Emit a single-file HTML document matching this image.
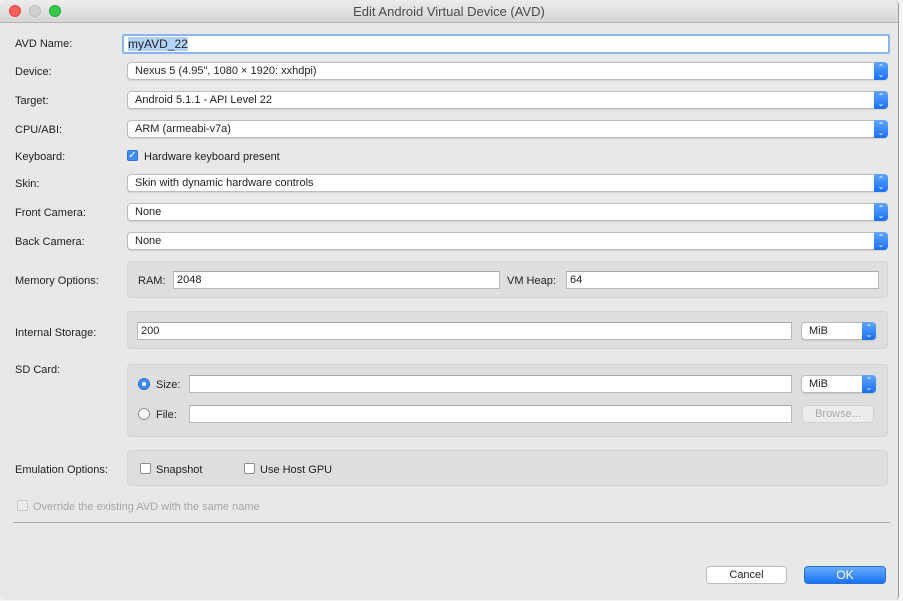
<!DOCTYPE html><html><head><style>
body{margin:0;width:903px;height:601px;background:#f4f4f4;position:relative;overflow:hidden;font-family:"Liberation Sans",sans-serif;font-size:11px;color:#222}
.win{position:absolute;left:0;top:0;width:898px;height:600px;background:#e8e8e8;border-right:1px solid #9a9a9a;border-radius:5px 5px 4px 4px;overflow:hidden}
.title{position:absolute;left:0;top:0;width:100%;height:22px;background:linear-gradient(#ececec,#d6d6d6);border-bottom:1px solid #b5b5b5;text-align:center;line-height:23px;font-size:13px;color:#4a4a4a}
.dot{position:absolute;top:5px;width:12px;height:12px;border-radius:50%;box-sizing:border-box}
.a{position:absolute}
.lbl{position:absolute;left:15px}
.sel{position:absolute;left:127px;width:761px;height:18px;background:#fff;border:1px solid #bcbcbc;border-radius:4px;box-shadow:0 1px 1px rgba(0,0,0,.1);line-height:16px;padding-left:7px;box-sizing:border-box}
.sel::after{content:"";position:absolute;right:-1px;top:-1px;width:14px;height:18px;background:linear-gradient(#5fa6fb,#1a6ff5);border-radius:0 4px 4px 0}
.sel i{position:absolute;right:2px;top:1px;color:#fff;font-style:normal;font-size:8px;line-height:7px;z-index:2;text-align:center;width:8px}
.inp{position:absolute;height:18px;background:#fff;border:1px solid #b8b8b8;border-top-color:#a8a8a8;box-sizing:border-box;line-height:16px;padding-left:3px}
.grp{position:absolute;left:127px;width:761px;background:#dedede;border:1px solid #d4d4d4;border-radius:4px;box-sizing:border-box}
.cb{position:absolute;width:11px;height:11px;background:#fff;border:1px solid #8e8e8e;border-radius:2px;box-sizing:border-box}
.rad{position:absolute;width:12px;height:12px;background:#fff;border:1px solid #8e8e8e;border-radius:50%;box-sizing:border-box}
.btn{position:absolute;height:18px;border-radius:4px;text-align:center;line-height:16px;box-sizing:border-box}
</style></head><body><div class="win">
<div class="title">Edit Android Virtual Device (AVD)<span class="dot" style="left:9px;background:#fc605b;border:1px solid #de4a44"></span><span class="dot" style="left:29px;background:#d0d0d0;border:1px solid #bdbdbd"></span><span class="dot" style="left:49px;background:#34c84a;border:1px solid #27aa35"></span></div>

<div class="lbl" style="top:38px">AVD Name:</div>
<div class="inp" style="left:122px;top:34px;width:768px;height:20px;border:2px solid #8ab6ee;border-radius:2px;padding-left:4px;font-size:12px;line-height:16px"><span style="background:#b3d3fb">myAVD_22</span></div>

<div class="lbl" style="top:66px">Device:</div><div class="sel" style="top:62px">Nexus 5 (4.95", 1080 × 1920: xxhdpi)<i>⌃<br>⌄</i></div>
<div class="lbl" style="top:95px">Target:</div><div class="sel" style="top:91px">Android 5.1.1 - API Level 22<i>⌃<br>⌄</i></div>
<div class="lbl" style="top:124px">CPU/ABI:</div><div class="sel" style="top:120px">ARM (armeabi-v7a)<i>⌃<br>⌄</i></div>
<div class="lbl" style="top:151px">Keyboard:</div>
<div class="cb" style="left:127px;top:150px;background:#3d8ff7;border-color:#2a74dc;color:#fff;font-size:10px;line-height:9px;text-align:center">✓</div>
<div class="a" style="left:144px;top:151px">Hardware keyboard present</div>
<div class="lbl" style="top:178px">Skin:</div><div class="sel" style="top:174px">Skin with dynamic hardware controls<i>⌃<br>⌄</i></div>
<div class="lbl" style="top:207px">Front Camera:</div><div class="sel" style="top:203px">None<i>⌃<br>⌄</i></div>
<div class="lbl" style="top:236px">Back Camera:</div><div class="sel" style="top:232px">None<i>⌃<br>⌄</i></div>

<div class="lbl" style="top:275px">Memory Options:</div>
<div class="grp" style="top:261px;height:37px"></div>
<div class="a" style="left:138px;top:275px">RAM:</div>
<div class="inp" style="left:173px;top:271px;width:327px">2048</div>
<div class="a" style="left:507px;top:275px">VM Heap:</div>
<div class="inp" style="left:566px;top:271px;width:313px">64</div>

<div class="lbl" style="top:327px">Internal Storage:</div>
<div class="grp" style="top:311px;height:38px"></div>
<div class="inp" style="left:137px;top:322px;width:655px">200</div>
<div class="sel" style="left:801px;top:322px;width:75px">MiB<i>⌃<br>⌄</i></div>

<div class="lbl" style="top:364px">SD Card:</div>
<div class="grp" style="top:364px;height:73px"></div>
<div class="rad" style="left:138px;top:378px;background:#3d8ff7;border-color:#2a74dc"><span style="position:absolute;left:3px;top:3px;width:4px;height:4px;background:#fff;border-radius:50%"></span></div>
<div class="a" style="left:156px;top:379px">Size:</div>
<div class="inp" style="left:189px;top:375px;width:603px"></div>
<div class="sel" style="left:801px;top:375px;width:75px">MiB<i>⌃<br>⌄</i></div>
<div class="rad" style="left:138px;top:408px"></div>
<div class="a" style="left:156px;top:409px">File:</div>
<div class="inp" style="left:189px;top:405px;width:603px"></div>
<div class="btn" style="left:802px;top:405px;width:72px;border:1px solid #d2d2d2;background:#ececec;color:#a8a8a8">Browse...</div>

<div class="lbl" style="top:464px">Emulation Options:</div>
<div class="grp" style="top:450px;height:36px"></div>
<div class="cb" style="left:140px;top:463px"></div><div class="a" style="left:156px;top:464px">Snapshot</div>
<div class="cb" style="left:244px;top:463px"></div><div class="a" style="left:260px;top:464px">Use Host GPU</div>

<div class="cb" style="left:17px;top:500px;border-color:#c8c8c8;background:#ececec"></div>
<div class="a" style="left:33px;top:501px;color:#a6a6a6">Override the existing AVD with the same name</div>
<div class="a" style="left:13px;top:522px;width:877px;height:1px;background:#a8a8a8"></div>

<div class="btn" style="left:706px;top:566px;width:81px;background:#fff;border:1px solid #bcbcbc">Cancel</div>
<div class="btn" style="left:804px;top:566px;width:82px;background:linear-gradient(#6aacfc,#1a73f5);border:1px solid #2a6fd8;color:#fff;font-size:12px">OK</div>
</div></body></html>
